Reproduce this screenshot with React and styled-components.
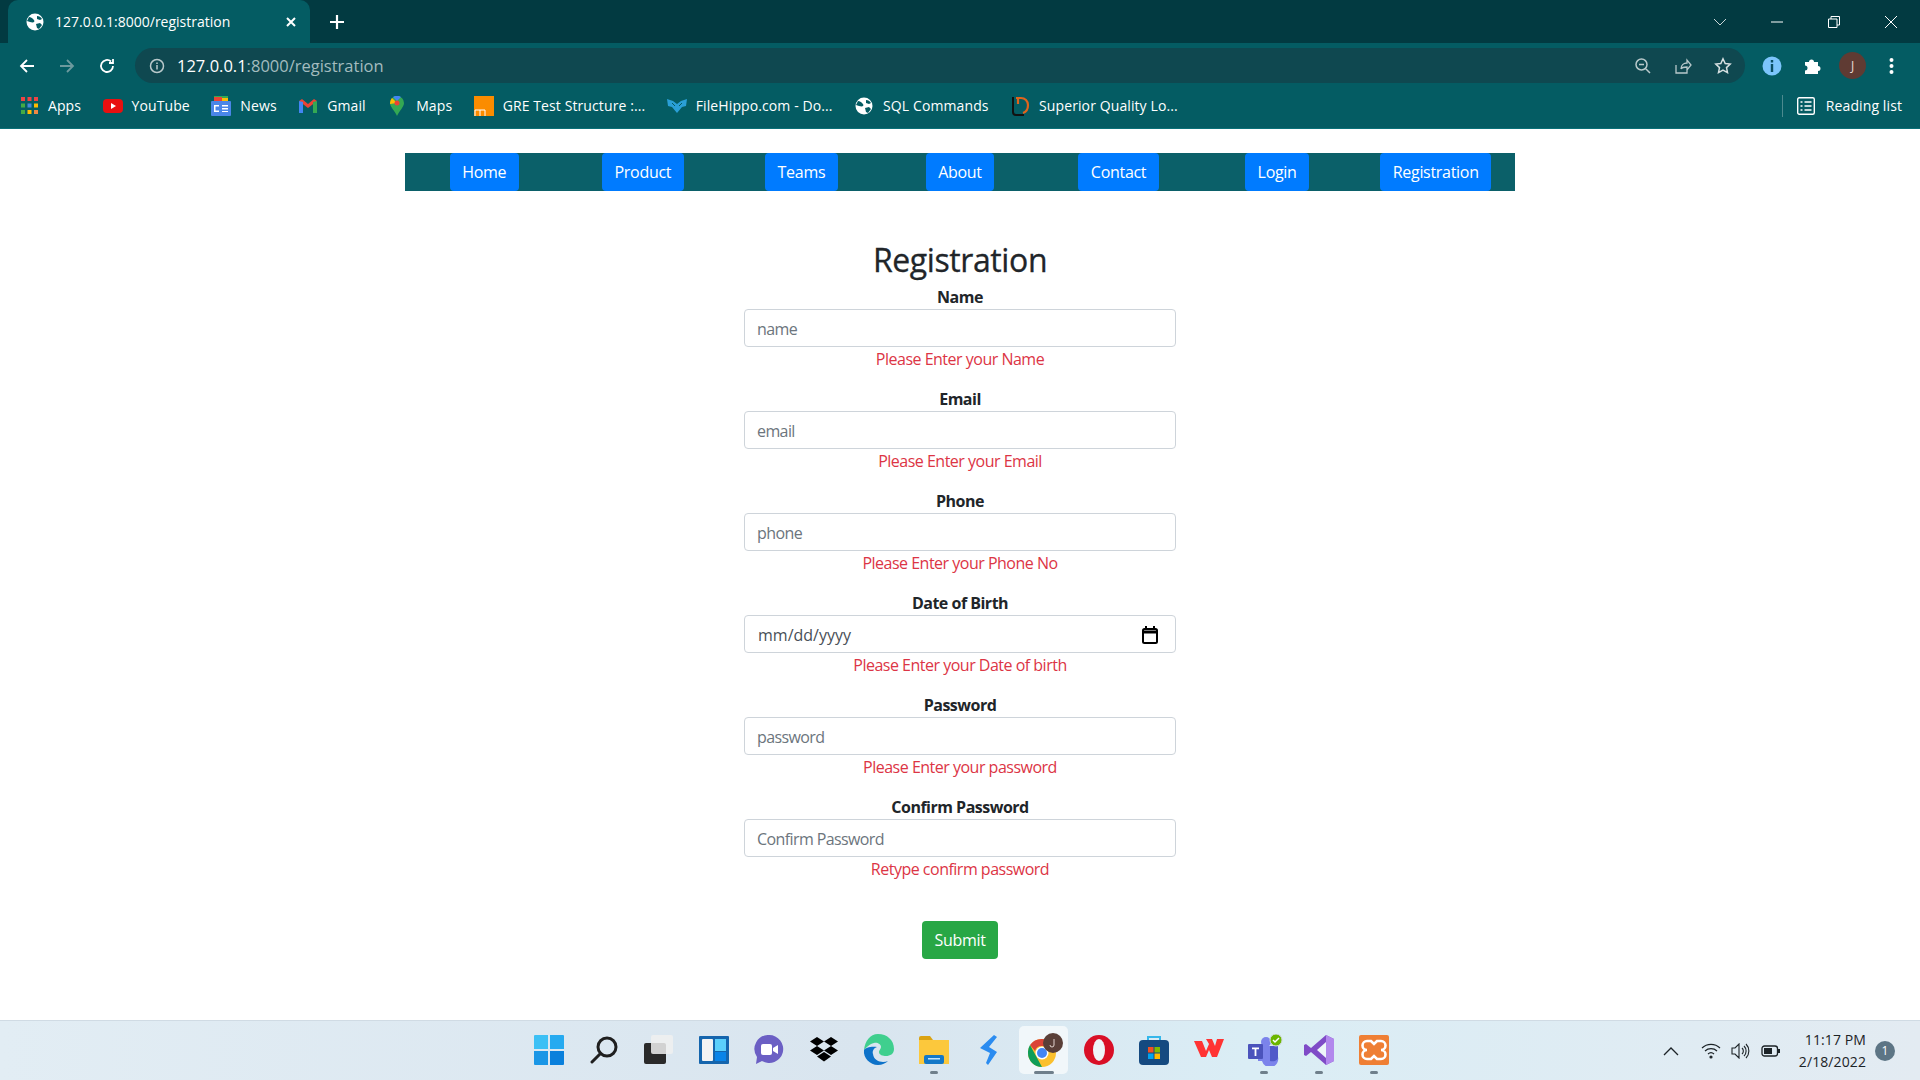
import React from "react";
import styled, { createGlobalStyle } from "styled-components";

const Global = createGlobalStyle`
  html, body { margin: 0; padding: 0; height: 100%; background: #fff; }
  * { box-sizing: border-box; }
  body { font-family: "Open Sans", "Noto Sans", sans-serif; color: #212529; }
`;

const Screen = styled.div`
  width: 1920px;
  height: 1080px;
  display: flex;
  flex-direction: column;
  overflow: hidden;
`;

const TabStrip = styled.div`
  height: 43px;
  background: #023a41;
  display: flex;
  align-items: flex-end;
  padding-left: 8px;
  color: #fff;
`;

const Tab = styled.div`
  width: 302px;
  height: 43px;
  background: #045c63;
  border-radius: 10px 10px 0 0;
  display: flex;
  align-items: center;
  padding: 0 12px 0 18px;
  font-size: 14px;
  gap: 11px;
`;

const TabTitle = styled.span`
  flex: 1;
`;

const NewTab = styled.div`
  width: 54px;
  height: 43px;
  display: flex;
  align-items: center;
  justify-content: center;
`;

const WindowControls = styled.div`
  margin-left: auto;
  height: 43px;
  display: flex;
  align-items: center;
  padding-right: 1px;
`;

const WindowBtn = styled.div`
  width: 57px;
  display: flex;
  justify-content: center;
`;

const Toolbar = styled.div`
  height: 44px;
  background: #045c63;
  padding: 5px 0 4px 7px;
  display: flex;
  align-items: center;
`;

const NavIcon = styled.div`
  width: 40px;
  display: flex;
  justify-content: center;
`;

const Omnibox = styled.div`
  margin-left: 8px;
  width: 1610px;
  height: 35px;
  border-radius: 18px;
  background: #0f4850;
  display: flex;
  align-items: center;
  padding: 0 13px 0 14px;
  font-size: 16.5px;
`;

const HostText = styled.span`
  color: #fff;
  margin-left: 12px;
`;

const PathText = styled.span`
  color: #a3bcbf;
`;

const OmniIcons = styled.div`
  margin-left: auto;
  display: flex;
  gap: 22px;
  align-items: center;
`;

const ExtIcons = styled.div`
  display: flex;
  align-items: center;
  margin-left: 17px;
`;

const Avatar = styled.div`
  width: 27px;
  height: 27px;
  border-radius: 50%;
  background: #5f3b33;
  color: #e8dcd8;
  font-size: 12px;
  display: flex;
  align-items: center;
  justify-content: center;
  margin-left: 18px;
  margin-right: 23px;
`;

const Bookmarks = styled.div`
  height: 42px;
  background: #045c63;
  border-bottom: 1px solid #0a7078;
  display: flex;
  align-items: center;
  padding: 0 0 4px 19px;
  color: #fff;
  font-size: 14px;
  letter-spacing: 0.1px;
`;

const Bookmark = styled.div`
  display: flex;
  align-items: center;
  gap: 9px;
  margin-right: 21.5px;
  white-space: nowrap;
`;

const BookmarkIcon = styled.span`
  width: 20px;
  height: 20px;
  display: flex;
  align-items: center;
  justify-content: center;
`;

const ReadingList = styled.div`
  margin-left: auto;
  margin-right: 18px;
  padding-left: 14px;
  height: 22px;
  border-left: 1px solid #4c8a8f;
  display: flex;
  align-items: center;
  gap: 11px;
`;

const Page = styled.div`
  flex: 1;
  background: #fff;
  padding-top: 24px;
  display: flex;
  flex-direction: column;
  align-items: center;
`;

const NavBar = styled.nav`
  width: 1110px;
  height: 38px;
  background: #0b6069;
  display: grid;
  grid-template-columns: repeat(7, 1fr);
  justify-items: center;
`;

const NavLink = styled.a`
  height: 38px;
  background: #007bff;
  color: #fff;
  font-size: 16px;
  letter-spacing: -0.3px;
  display: flex;
  align-items: center;
  padding: 0 12.5px;
  border-radius: 4px;
`;

const Form = styled.form`
  width: 432px;
  margin-top: 52px;
  display: flex;
  flex-direction: column;
  align-items: center;
`;

const Heading = styled.h1`
  margin: 0 0 4px;
  height: 38px;
  font-size: 32px;
  line-height: 33px;
  font-weight: 500;
  letter-spacing: -0.4px;
  -webkit-text-stroke: 0.3px #212529;
`;

const Field = styled.div`
  width: 100%;
  height: 102px;
  display: flex;
  flex-direction: column;
  align-items: center;
`;

const Label = styled.label`
  height: 24px;
  line-height: 24px;
  font-size: 16px;
  font-weight: 700;
  letter-spacing: -0.5px;
`;

const InputBox = styled.div`
  width: 100%;
  height: 38px;
  border: 1px solid #ced4da;
  border-radius: 4px;
  padding: 2px ${(p) => (p.$date ? 17 : 12)}px 0 ${(p) => (p.$date ? 13 : 12)}px;
  display: flex;
  align-items: center;
  justify-content: space-between;
  font-size: 16px;
  letter-spacing: ${(p) => (p.$date ? 0 : -0.6)}px;
  color: ${(p) => (p.$date ? "#495057" : "#6c757d")};
`;

const ErrorText = styled.div`
  height: 24px;
  line-height: 24px;
  font-size: 16px;
  letter-spacing: -0.5px;
  color: #dc3545;
`;

const Submit = styled.button`
  margin-top: 24px;
  width: 76px;
  height: 38px;
  background: #28a745;
  color: #fff;
  border: 0;
  border-radius: 4px;
  font: inherit;
  font-size: 16px;
  letter-spacing: -0.3px;
`;

const Taskbar = styled.div`
  height: 60px;
  background: linear-gradient(90deg, #e2edf4, #d9e5ef 45%, #daedf5 65%, #e3ebf2);
  border-top: 1px solid #d0dbe4;
  position: relative;
  display: flex;
  align-items: center;
  justify-content: flex-end;
`;

const TaskIcons = styled.div`
  position: absolute;
  left: 521px;
  top: 0;
  height: 57px;
  display: flex;
  align-items: center;
`;

const TaskSlot = styled.div`
  width: ${(p) => (p.$active ? 49 : 55)}px;
  margin: 0 ${(p) => (p.$active ? 3 : 0)}px;
  padding-left: ${(p) => p.$nudge || 0}px;
  height: 48px;
  display: flex;
  align-items: center;
  justify-content: center;
  position: relative;
  border-radius: 5px;
  background: ${(p) => (p.$active ? "#f1f7fa" : "transparent")};
  &::after {
    content: "";
    display: ${(p) => (p.$dot ? "block" : "none")};
    position: absolute;
    bottom: 0;
    left: 50%;
    transform: translateX(-50%);
    width: ${(p) => (p.$active ? 20 : 8)}px;
    height: 3px;
    border-radius: 2px;
    background: #6f7f8b;
  }
`;

const Tray = styled.div`
  display: flex;
  align-items: center;
  gap: 10px;
  padding-right: 25px;
`;

const Chevron = styled.span`
  display: flex;
  margin-right: 12px;
`;

const Clock = styled.div`
  margin-left: 8px;
  font-size: 14px;
  line-height: 22px;
  text-align: right;
  color: #1c2327;
  letter-spacing: 0.1px;
`;

const Badge = styled.div`
  width: 20px;
  height: 20px;
  margin-left: -1px;
  border-radius: 50%;
  background: #5d7585;
  color: #fff;
  font-size: 12px;
  display: flex;
  align-items: center;
  justify-content: center;
`;

const Globe = ({ size = 18 }) => (
  <svg width={size} height={size} viewBox="0 0 18 18">
    <circle cx="9" cy="9" r="8.5" fill="#fff" />
    <path d="M3 4c2 0 3 1 4 2s2 2 1 3-3 0-4 0-2-1-3-1zM11 3c2 0 4 1 5 3l-2 1-3-1zM10 11l4-1 2 2-3 4-2-1z" fill="#045c63" />
  </svg>
);

const Line = ({ d, w = 18, h = 18, vb = "0 0 18 18", color = "#fff", sw = 1.8 }) => (
  <svg width={w} height={h} viewBox={vb} fill="none" stroke={color} strokeWidth={sw}>
    <path d={d} />
  </svg>
);

const GridIcon = () => {
  const c = ["#e44", "#e44", "#e44", "#4a4", "#48d", "#fb0", "#4a4", "#fb0", "#e84"];
  return (
    <svg width="17" height="17" viewBox="0 0 17 17">
      {c.map((f, i) => (
        <rect key={i} x={(i % 3) * 6.5} y={Math.floor(i / 3) * 6.5} width="4" height="4" fill={f} />
      ))}
    </svg>
  );
};

const pages = [
  { label: "Name", ph: "name", err: "Please Enter your Name" },
  { label: "Email", ph: "email", err: "Please Enter your Email" },
  { label: "Phone", ph: "phone", err: "Please Enter your Phone No" },
  { label: "Date of Birth", ph: "mm/dd/yyyy", err: "Please Enter your Date of birth", date: true },
  { label: "Password", ph: "password", err: "Please Enter your password" },
  { label: "Confirm Password", ph: "Confirm Password", err: "Retype confirm password" },
];

const links = ["Home", "Product", "Teams", "About", "Contact", "Login", "Registration"];

export default function App() {
  return (
    <Screen>
      <Global />
      <TabStrip>
        <Tab>
          <Globe />
          <TabTitle>127.0.0.1:8000/registration</TabTitle>
          <Line w={14} h={14} vb="0 0 14 14" sw={2} d="M3 3l8 8M11 3l-8 8" />
        </Tab>
        <NewTab>
          <Line w={16} h={16} vb="0 0 16 16" sw={2.2} d="M8 1v14M1 8h14" />
        </NewTab>
        <WindowControls>
          <WindowBtn><Line w={14} h={10} vb="0 0 14 10" sw={0.8} d="M1 2l6 6 6-6" /></WindowBtn>
          <WindowBtn><Line w={12} h={2} vb="0 0 12 2" sw={1} d="M0 1h12" /></WindowBtn>
          <WindowBtn><Line w={12} h={12} vb="0 0 12 12" sw={1} d="M.5 3h8.5v8.5H.5zM3 3V.5h8.5V9H9" /></WindowBtn>
          <WindowBtn><Line w={14} h={14} vb="0 0 14 14" sw={1} d="M1 1l12 12M13 1L1 13" /></WindowBtn>
        </WindowControls>
      </TabStrip>
      <Toolbar>
        <NavIcon><Line d="M16 9H3M9 3L3 9l6 6" /></NavIcon>
        <NavIcon><Line color="#6d9a9e" d="M2 9h13M9 3l6 6-6 6" /></NavIcon>
        <NavIcon><Line d="M15 9a6 6 0 1 1-2-4.5M15 2v4h-4" /></NavIcon>
        <Omnibox>
          <Line w={16} h={16} vb="0 0 16 16" color="#b9c9cb" sw={1.5} d="M8 1.500a6.500 6.500 0 1 0 0 13 6.500 6.500 0 0 0 0-13M8 7v4.500M8 4.500v1.500" />
          <HostText>127.0.0.1</HostText>
          <PathText>:8000/registration</PathText>
          <OmniIcons>
            <Line color="#b9c9cb" sw={1.5} d="M7.500 2a5.500 5.500 0 1 0 0 11 5.500 5.500 0 0 0 0-11M11.500 11.500L16 16M5 7.500h5" />
            <Line color="#b9c9cb" sw={1.3} d="M2 8v8h11v-3M7 12c0-4 3-6 6-6V3l4 5-4 5v-3c-3 0-5 0-6 2" />
            <Line color="#d6e0e1" sw={1.5} d="M9 1.800l2.200 4.700 5 .6-3.700 3.500 1 5L9 13l-4.500 2.600 1-5L1.800 7.100l5-.6z" />
          </OmniIcons>
        </Omnibox>
        <ExtIcons>
          <svg width="20" height="20" viewBox="0 0 20 20" style={{ marginRight: 21 }}>
            <circle cx="10" cy="10" r="9.500" fill="#7cc5fb" />
            <path d="M8.800 8h2.400v8H8.800zM8.800 4h2.400v2.400H8.800z" fill="#0a4f63" />
          </svg>
          <svg width="18" height="18" viewBox="0 0 18 18">
            <path d="M2 5h4a2.500 2.500 0 1 1 5 0h4v4a2.500 2.500 0 1 1 0 5v3H2v-3.500a2.500 2.500 0 1 0 0-5z" fill="#fff" />
          </svg>
          <Avatar>J</Avatar>
          <svg width="5" height="18" viewBox="0 0 5 18">
            <circle cx="2.500" cy="3" r="2" fill="#fff" /><circle cx="2.500" cy="9" r="2" fill="#fff" /><circle cx="2.500" cy="15" r="2" fill="#fff" />
          </svg>
        </ExtIcons>
      </Toolbar>
      <Bookmarks>
        <Bookmark><BookmarkIcon><GridIcon /></BookmarkIcon>Apps</Bookmark>
        <Bookmark>
          <BookmarkIcon><svg width="20" height="14" viewBox="0 0 20 14"><rect width="20" height="14" rx="4" fill="#e81010" /><path d="M8 4l5 3-5 3z" fill="#fff" /></svg></BookmarkIcon>
          YouTube
        </Bookmark>
        <Bookmark>
          <BookmarkIcon><svg width="20" height="20" viewBox="0 0 20 20"><path d="M3 0h14v5H3z" fill="#34a853" /><path d="M3 1h8v4H3z" fill="#ea4335" /><path d="M11 2h6v4h-6z" fill="#fbbc04" /><rect y="5" width="20" height="15" rx="1" fill="#4a86e8" /><path d="M3 9h5v1.500H4.500v4H8V16H3zM11 9h6v1.500h-6zM11 12h6v1.500h-6zM11 15h6v1h-6z" fill="#fff" /></svg></BookmarkIcon>
          News
        </Bookmark>
        <Bookmark>
          <BookmarkIcon><svg width="18" height="14" viewBox="0 0 18 14"><path d="M0 2l3-2 6 5 6-5 3 2-9 7z" fill="#ea4335" /><path d="M14 14V3l4-1v12z" fill="#34a853" /><path d="M0 14V2l4 1v11z" fill="#4285f4" /></svg></BookmarkIcon>
          Gmail
        </Bookmark>
        <Bookmark>
          <BookmarkIcon><svg width="14" height="20" viewBox="0 0 14 20"><path d="M7 20C5 15 0 11 0 7a7 7 0 0 1 14 0c0 4-5 8-7 13z" fill="#34a853" /><path d="M2 2l5 5-7 1c0-3 1-5 2-6z" fill="#fbbc04" /><path d="M3 1a7 7 0 0 1 8 0L7 5z" fill="#4285f4" /><circle cx="7" cy="7" r="2.500" fill="#ea4335" /></svg></BookmarkIcon>
          Maps
        </Bookmark>
        <Bookmark>
          <BookmarkIcon><svg width="20" height="20" viewBox="0 0 20 20"><rect width="20" height="20" fill="#fb8c00" /><path d="M1 20v-6h5v6M6 14h5v6" stroke="#fff" fill="none" /></svg></BookmarkIcon>
          GRE Test Structure :...
        </Bookmark>
        <Bookmark>
          <BookmarkIcon><svg width="20" height="15" viewBox="0 0 20 15"><path d="M0 1l6 2 4 3 4-3 6-2-1 7-4 1-5 6-5-6-4-1z" fill="#2a9fd6" /><path d="M5 5l3 3M15 5l-3 3" stroke="#045c63" /></svg></BookmarkIcon>
          FileHippo.com - Do...
        </Bookmark>
        <Bookmark><BookmarkIcon><Globe /></BookmarkIcon>SQL Commands</Bookmark>
        <Bookmark>
          <BookmarkIcon><svg width="19" height="20" viewBox="0 0 19 20" fill="none"><path d="M2 1v15c0 2 1 3 3 3h8" stroke="#111" strokeWidth="2" /><path d="M5 2h5c4 0 7 3 7 7s-2 7-5 8M7 2v6" stroke="#e0641c" strokeWidth="2.200" /></svg></BookmarkIcon>
          Superior Quality Lo...
        </Bookmark>
        <ReadingList>
          <svg width="18" height="18" viewBox="0 0 18 18" fill="none" stroke="#fff" strokeWidth="1.400"><rect x=".7" y=".7" width="16.600" height="16.600" rx="1.500" /><path d="M3.500 5h2M3.500 9h2M3.500 13h2M7.500 5h7M7.500 9h7M7.500 13h7" /></svg>
          Reading list
        </ReadingList>
      </Bookmarks>
      <Page>
        <NavBar>
          {links.map((l) => (
            <NavLink key={l}>{l}</NavLink>
          ))}
        </NavBar>
        <Form>
          <Heading>Registration</Heading>
          {pages.map((f) => (
            <Field key={f.label}>
              <Label>{f.label}</Label>
              <InputBox $date={f.date}>
                {f.ph}
                {f.date && (
                  <svg width="16" height="18" viewBox="0 0 16 18" fill="none" stroke="#000" strokeWidth="2">
                    <rect x="1" y="3" width="14" height="14" rx="1.500" />
                    <path d="M1 6h14" strokeWidth="3" /><path d="M4 0v3M12 0v3" />
                  </svg>
                )}
              </InputBox>
              <ErrorText>{f.err}</ErrorText>
            </Field>
          ))}
          <Submit type="button">Submit</Submit>
        </Form>
      </Page>
      <Taskbar>
        <TaskIcons>
          <TaskSlot>
            <svg width="30" height="30" viewBox="0 0 30 30"><path d="M0 1a1 1 0 0 1 1-1h13v14H0z" fill="#3cc0f5" /><path d="M16 0h13a1 1 0 0 1 1 1v13H16z" fill="#26aaf0" /><path d="M0 16h14v14H1a1 1 0 0 1-1-1z" fill="#1a96e6" /><path d="M16 16h14v13a1 1 0 0 1-1 1H16z" fill="#0a80dc" /></svg>
          </TaskSlot>
          <TaskSlot>
            <svg width="28" height="28" viewBox="0 0 28 28" fill="none" stroke="#1f1f1f" strokeWidth="3"><circle cx="17" cy="11" r="9" /><path d="M10.500 17.500L2 26" strokeLinecap="round" /></svg>
          </TaskSlot>
          <TaskSlot>
            <svg width="30" height="30" viewBox="0 0 30 30"><rect x="0" y="8" width="22" height="21" rx="2" fill="#2a2a2a" /><rect x="7" y="0" width="22" height="19" rx="2" fill="#f0f0f0" opacity=".85" /></svg>
          </TaskSlot>
          <TaskSlot>
            <svg width="30" height="28" viewBox="0 0 30 28"><rect width="30" height="28" rx="1" fill="#1565ad" /><rect x="3" y="3" width="11" height="22" rx="1" fill="#f3f3f3" /><rect x="16" y="3" width="11" height="12" fill="#5cd0fb" /><rect x="16" y="16" width="11" height="9" fill="#0a84e8" /></svg>
          </TaskSlot>
          <TaskSlot>
            <svg width="30" height="30" viewBox="0 0 30 30"><path d="M15 0a14 14 0 1 1-7 26l-6 3 1-7A14 14 0 0 1 15 0z" fill="#6b5fc4" /><rect x="7" y="9" width="11" height="11" rx="2" fill="#fff" /><path d="M19 13l5-3v9l-5-3z" fill="#fff" /></svg>
          </TaskSlot>
          <TaskSlot>
            <svg width="30" height="26" viewBox="0 0 30 26"><path d="M8 0l7 4.500L8 9 1 4.500zM22 0l7 4.500L22 9l-7-4.500zM8 9l7 4.500L8 18l-7-4.500zM22 9l7 4.500L22 18l-7-4.500zM15 15l7 4.500-7 5-7-5z" fill="#000" /></svg>
          </TaskSlot>
          <TaskSlot>
            <svg width="31" height="31" viewBox="0 0 31 31"><path d="M15 0c9 0 16 6 16 15 0 5-4 7-8 7-3 0-7-1-7-4 0-2 2-3 2-5 0-3-4-5-7-4-5 1-8 5-10 7C2 7 7 0 15 0z" fill="#3fcf8e" /><path d="M1 16c-1 8 6 15 14 15 4 0 8-2 10-4-5 2-14 1-15-7-1-3 1-6 4-7-6-1-12 1-13 3z" fill="#0d72c9" /></svg>
          </TaskSlot>
          <TaskSlot $dot>
            <svg width="30" height="28" viewBox="0 0 30 28"><path d="M0 2a2 2 0 0 1 2-2h9l3 4h-14z" fill="#dba312" /><rect y="4" width="30" height="24" fill="#fcc83c" /><rect x="5" y="19" width="20" height="9" rx="2" fill="#1478c8" /><rect x="9" y="22" width="12" height="1.500" fill="#bfe3ff" /></svg>
          </TaskSlot>
          <TaskSlot>
            <svg width="18" height="30" viewBox="0 0 18 30"><path d="M14 0l3 2-8 10 8 5-9 13-2-2 4-10-10-5z" fill="#2b8cf0" /></svg>
          </TaskSlot>
          <TaskSlot $active $dot $nudge={4}>
            <svg width="35" height="34" viewBox="0 0 35 34">
              <circle cx="14" cy="20" r="14" fill="#fbc02d" />
              <path d="M14 6a14 14 0 0 1 12 7H14a7 7 0 0 0-7 5L2 12a14 14 0 0 1 12-6z" fill="#db4437" />
              <path d="M0 20a14 14 0 0 1 2-8l6 11 6 11A14 14 0 0 1 0 20z" fill="#0f9d58" />
              <circle cx="14" cy="20" r="6.500" fill="#fff" /><circle cx="14" cy="20" r="5" fill="#4285f4" />
              <circle cx="25" cy="10" r="10" fill="#5a3f38" />
              <path d="M26 6v6a2 2 0 0 1-4 0" stroke="#e0d2cd" fill="none" />
            </svg>
          </TaskSlot>
          <TaskSlot>
            <svg width="30" height="30" viewBox="0 0 30 30"><circle cx="15" cy="15" r="15" fill="#d90f26" /><ellipse cx="15" cy="15" rx="6" ry="11" fill="#eef5f9" /></svg>
          </TaskSlot>
          <TaskSlot>
            <svg width="30" height="30" viewBox="0 0 30 30"><path d="M9 5V2h12v3" stroke="#35b7ea" strokeWidth="2" fill="none" /><rect y="5" width="30" height="25" rx="4" fill="#154a80" /><rect x="9" y="12" width="5.500" height="5.500" fill="#f25022" /><rect x="15.500" y="12" width="5.500" height="5.500" fill="#7fba00" /><rect x="9" y="18.500" width="5.500" height="5.500" fill="#00a4ef" /><rect x="15.500" y="18.500" width="5.500" height="5.500" fill="#ffb900" /></svg>
          </TaskSlot>
          <TaskSlot>
            <svg width="30" height="22" viewBox="0 0 30 22"><path d="M0 2h8l4 10 3-7-3-5h6l3 7 2-7h7l-7 18h-5l-3-7-3 7H7z" fill="#f33" /></svg>
          </TaskSlot>
          <TaskSlot $dot $nudge={4}>
            <svg width="36" height="32" viewBox="0 0 36 32"><circle cx="18" cy="8" r="5" fill="#7b83eb" /><path d="M10 12h20v11a8 8 0 0 1-16 4H10z" fill="#7b83eb" /><path d="M22 12h8v11c0 3-3 5-8 4z" fill="#5059c9" /><rect y="10" width="15" height="15" rx="1" fill="#4b53bc" /><path d="M4 13.500h7v1.800H8.400V22H6.600V15.300H4z" fill="#fff" /><circle cx="28" cy="6" r="6" fill="#6bb700" stroke="#d0d8da" /><path d="M25 6l2 2 4-4" stroke="#fff" strokeWidth="1.500" fill="none" /></svg>
          </TaskSlot>
          <TaskSlot $dot>
            <svg width="30" height="30" viewBox="0 0 30 30"><path d="M22 0l8 4v22l-8 4L7 17l-5 4-2-1V10l2-1 5 4z" fill="#7f4bc7" /><path d="M22 7v16l-9-8z" fill="#eef5f9" /><path d="M22 0l8 4v22l-8 4z" fill="#b288ed" /></svg>
          </TaskSlot>
          <TaskSlot $dot>
            <svg width="30" height="30" viewBox="0 0 30 30"><rect width="30" height="30" rx="2" fill="#ef7f34" /><path d="M8 6h4l3 3 3-3h4a3 3 0 0 1 0 9 3 3 0 0 1 0 9h-4l-3-3-3 3H8a3 3 0 0 1 0-9 3 3 0 0 1 0-9z" fill="none" stroke="#fff" strokeWidth="2.600" /></svg>
          </TaskSlot>
        </TaskIcons>
        <Tray>
          <Chevron>
            <Line w={16} h={10} vb="0 0 16 10" color="#1c2327" sw={1.300} d="M1 9l7-7 7 7" />
          </Chevron>
          <svg width="20" height="16" viewBox="0 0 20 16" fill="none" stroke="#1c2327" strokeWidth="1.200">
            <path d="M1 5a13 13 0 0 1 18 0M4 8a9 9 0 0 1 12 0M7 11a4.500 4.500 0 0 1 6 0" /><circle cx="10" cy="14" r="1" fill="#1c2327" />
          </svg>
          <svg width="20" height="16" viewBox="0 0 20 16" fill="none" stroke="#1c2327" strokeWidth="1.100">
            <path d="M1 5h3l4-4v14l-4-4H1zM11 5a4 4 0 0 1 0 6M13 3a7 7 0 0 1 0 10M15 1a10 10 0 0 1 0 14" />
          </svg>
          <svg width="20" height="12" viewBox="0 0 20 12" fill="none" stroke="#1c2327" strokeWidth="1.300">
            <rect x="1" y="1" width="15.500" height="10" rx="2.500" /><rect x="3" y="3" width="8" height="6" fill="#1c2327" stroke="none" /><path d="M18 4v4" strokeWidth="2" />
          </svg>
          <Clock>11:17 PM<br />2/18/2022</Clock>
          <Badge>1</Badge>
        </Tray>
      </Taskbar>
    </Screen>
  );
}
